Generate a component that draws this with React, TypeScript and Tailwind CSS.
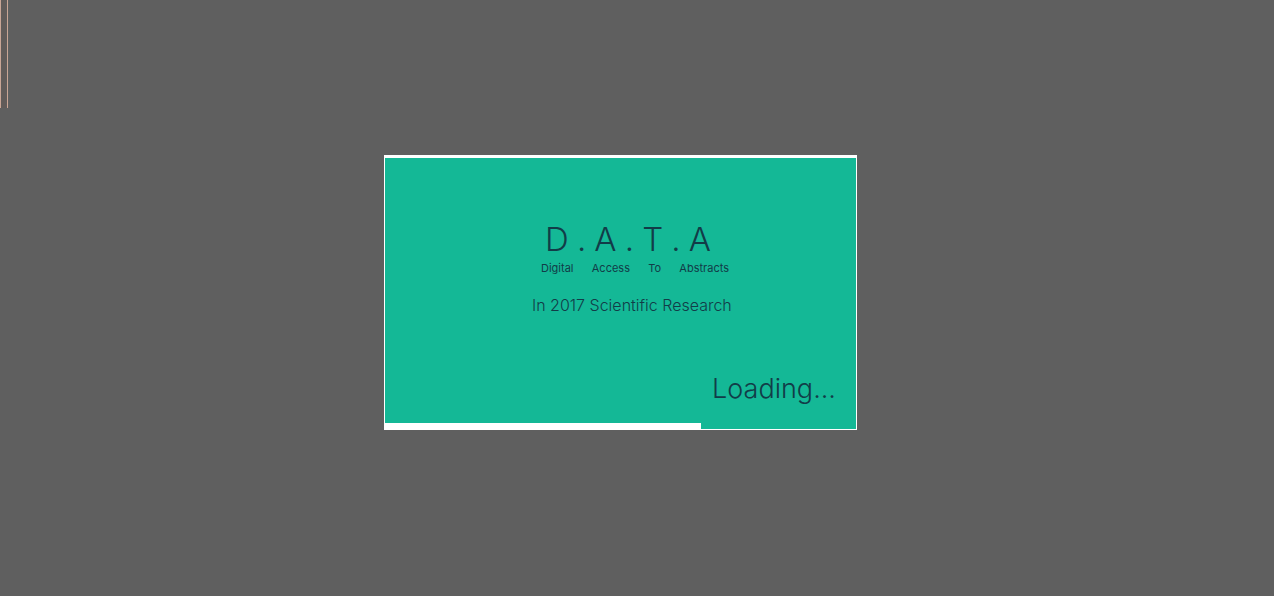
const letters = ['D', '.', 'A', '.', 'T', '.', 'A'];
const words = ['Digital', 'Access', 'To', 'Abstracts'];

export default function App() {
  return (
    <div className="relative flex min-h-screen items-center justify-center bg-[#5f5f5f] pr-[33px] pb-[11px] font-['Inter','Liberation_Sans',sans-serif] font-light text-[#123c48]">
      <div className="absolute top-0 left-0 h-[108px] w-2 border-x border-[#c9a595] bg-[#615b59]" />
      <main className="flex h-[275px] w-full max-w-[473px] flex-col border border-t-[3px] border-white bg-[#14b896]">
        <div className="flex flex-1 flex-col pt-[61px]">
          <h1 aria-label="D.A.T.A" className="ml-[160px] flex w-[166px] justify-between text-[33px] leading-10 font-light">
            {letters.map((letter, i) => (
              <span key={i}>{letter}</span>
            ))}
          </h1>
          <p className="mt-px ml-[156px] flex w-[188px] justify-between text-[11px] leading-4 font-normal">
            {words.map((word) => (
              <span key={word}>{word}</span>
            ))}
          </p>
          <p className="mt-[17px] ml-[147px] text-base leading-6">In 2017 Scientific Research</p>
          <p role="status" className="mt-[52px] mr-5 text-right text-[27px] leading-10">Loading...</p>
        </div>
        <div role="progressbar" aria-label="Loading" aria-valuenow={67} aria-valuemin={0} aria-valuemax={100} className="h-1.5">
          <div className="h-full w-[67%] bg-white" />
        </div>
      </main>
    </div>
  );
}
